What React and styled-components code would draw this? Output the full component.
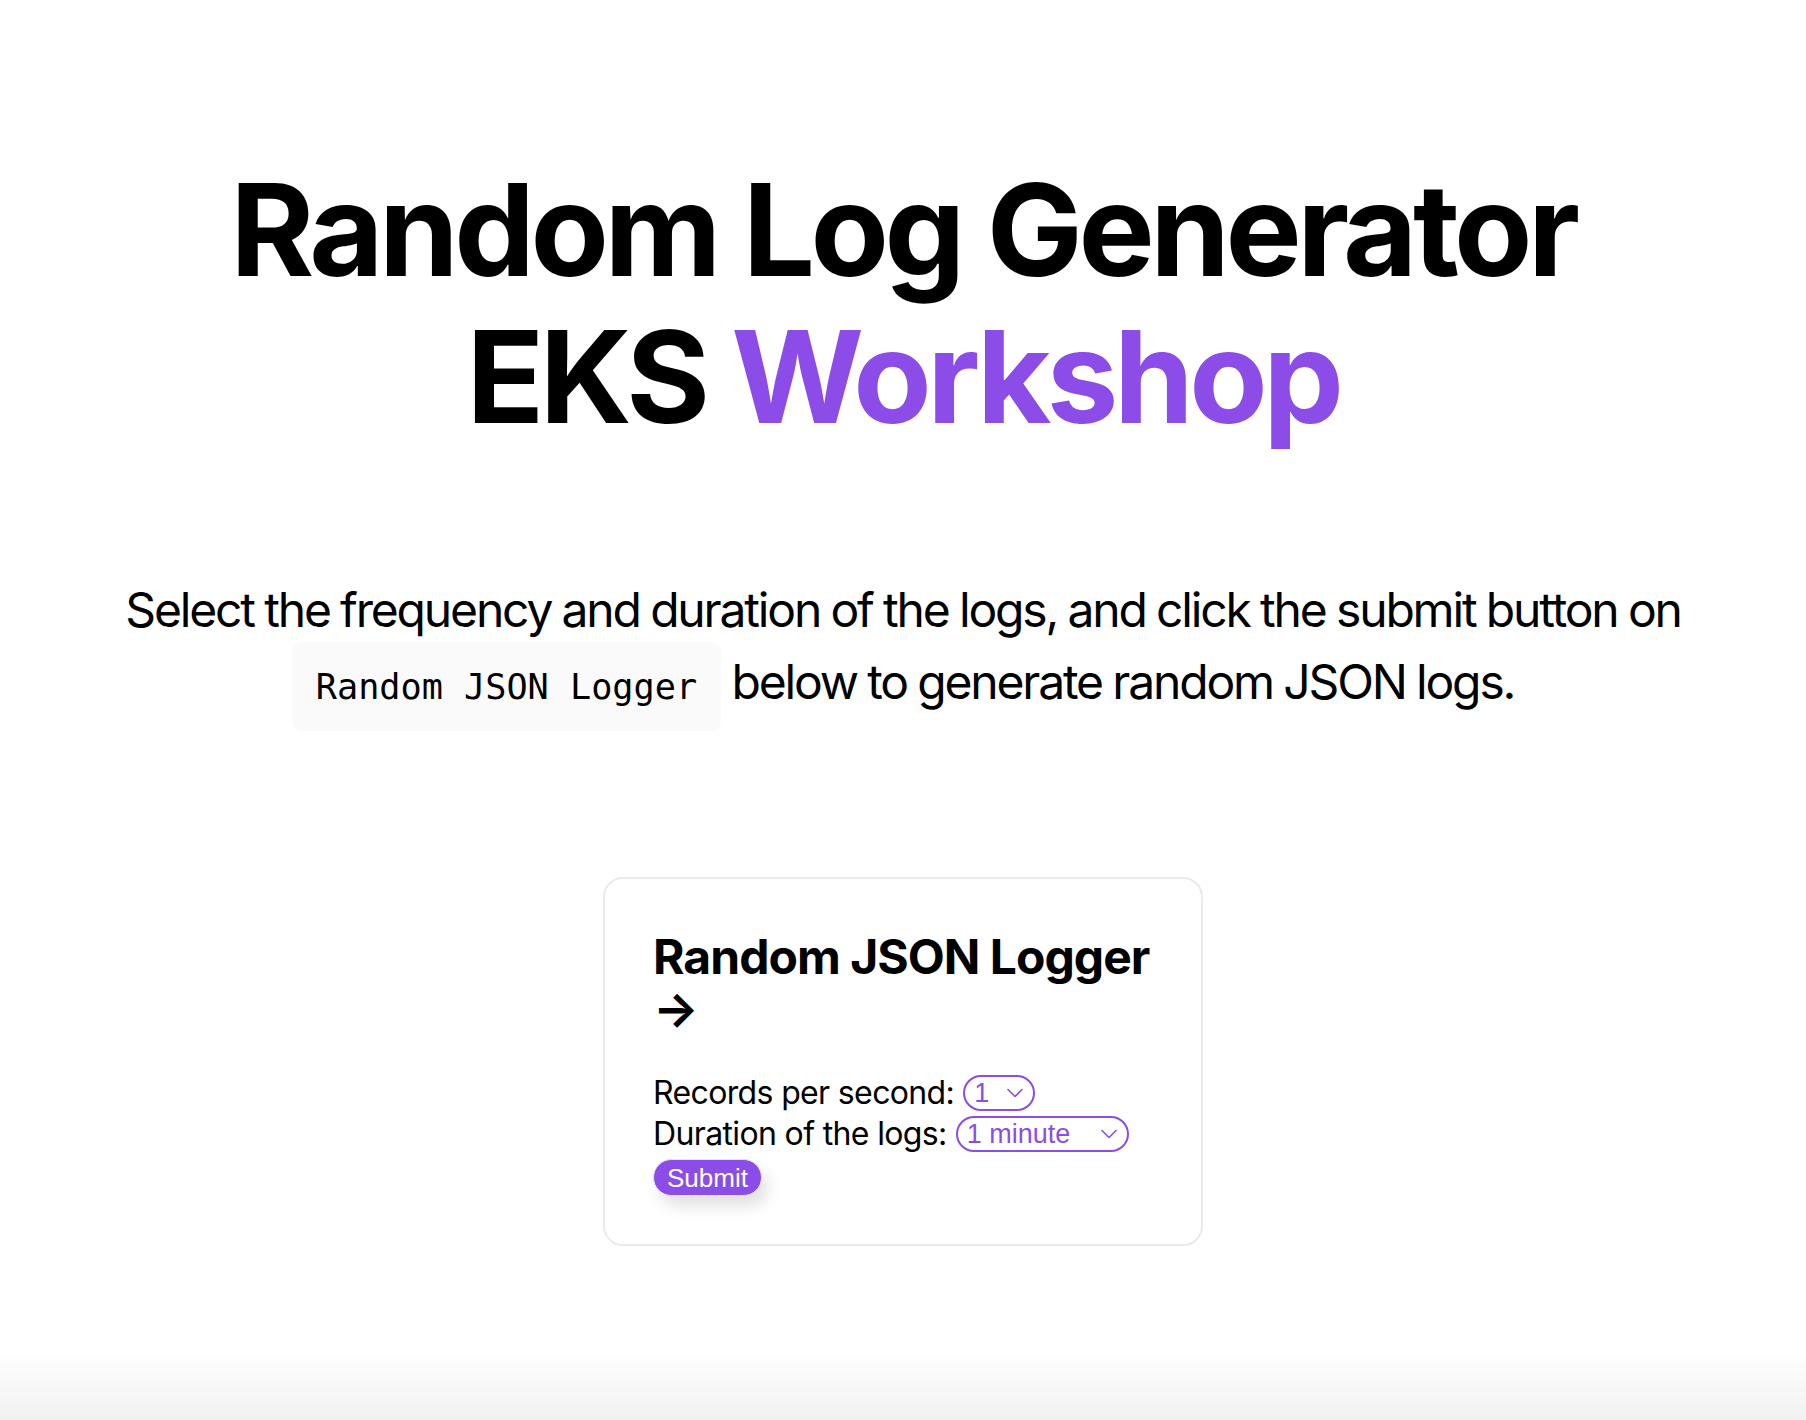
import React from 'react';
import styled, {createGlobalStyle} from 'styled-components';

const GlobalStyle = createGlobalStyle`
  html, body {
    margin: 0;
    padding: 0;
    background: #ffffff;
    color: #000000;
    font-family: Inter, "Noto Sans", "Liberation Sans", sans-serif;
  }
  * {
    box-sizing: border-box;
  }
`;

const purple = '#8b4ce8';

const Page = styled.div`
  min-height: 1420px;
  padding: 0 16px;
  display: flex;
  flex-direction: column;
  align-items: center;
  background: linear-gradient(to bottom, #ffffff 0, #ffffff calc(100% - 70px), #f1f1f1 100%);
`;

const Main = styled.main`
  padding-top: 156px;
  display: flex;
  flex-direction: column;
  align-items: center;
`;

const Title = styled.h1`
  margin: 0;
  font-size: 128px;
  line-height: 1.15;
  font-weight: 700;
  letter-spacing: -0.035em;
  text-align: center;
`;

const Accent = styled.span`
  color: ${purple};
`;

const Description = styled.p`
  max-width: 1640px;
  margin: 124px 0 127px;
  font-size: 48px;
  line-height: 1.5;
  letter-spacing: -0.045em;
  word-spacing: -1px;
  text-align: center;
`;

const Code = styled.code`
  white-space: nowrap;
  background: #fafafa;
  border-radius: 10px;
  padding: 24px;
  font-size: 35.2px;
  letter-spacing: 0;
  word-spacing: 0;
  font-family: "DejaVu Sans Mono", "Liberation Mono", monospace;
`;

const Grid = styled.div`
  display: flex;
  align-items: center;
  justify-content: center;
  flex-wrap: wrap;
`;

const Card = styled.div`
  margin: 32px;
  width: 600px;
  padding: 48px;
  text-align: left;
  border: 2px solid #eaeaea;
  border-radius: 20px;
`;

const CardTitle = styled.h2`
  margin: 4px 0 37px 0;
  font-size: 48px;
  line-height: 52px;
  font-weight: 700;
  letter-spacing: -0.02em;
`;

const Form = styled.form`
  display: flex;
  flex-direction: column;
  align-items: flex-start;
`;

const Row = styled.div`
  display: flex;
  align-items: center;
  gap: 9px;
  height: 41px;
`;

const Label = styled.label`
  font-size: 32px;
  letter-spacing: -0.02em;
`;

const SelectBox = styled.div`
  display: inline-flex;
  align-items: center;
  width: ${p => p.$width}px;
  height: 36px;
  padding: 0 10px 0 9px;
  border: 2px solid ${purple};
  border-radius: 18px;
  color: ${purple};
`;

const NativeSelect = styled.select`
  flex: 1;
  min-width: 0;
  appearance: none;
  -webkit-appearance: none;
  border: none;
  outline: none;
  background: transparent;
  padding: 0;
  color: ${purple};
  font-family: "Liberation Sans", Arial, sans-serif;
  font-size: 27px;
`;

const Chevron = () => (
    <svg width="16" height="10" viewBox="0 0 16 10" fill="none">
        <path d="M1 1.5 L8 8.5 L15 1.5" stroke={purple} strokeWidth="1.6" strokeLinecap="round" strokeLinejoin="round"/>
    </svg>
);

const SubmitButton = styled.button`
  margin-top: 5px;
  height: 37px;
  padding: 0 13px;
  border: 1px solid #e6e6e6;
  border-radius: 19px;
  background: ${purple};
  color: #ffffff;
  font-family: "Liberation Sans", Arial, sans-serif;
  font-size: 26px;
  line-height: 1;
  box-shadow: 6px 10px 16px rgba(0, 0, 0, 0.12);
  cursor: pointer;
`;

export default function App() {
    return (
        <>
            <GlobalStyle/>
            <Page>
                <Main>
                    <Title>
                        Random Log Generator<br/>
                        EKS <Accent>Workshop</Accent>
                    </Title>

                    <Description>
                        Select the frequency and duration of the logs, and click the submit button on{' '}
                        <Code>Random JSON Logger</Code> below to generate random JSON logs.
                    </Description>

                    <Grid>
                        <Card>
                            <CardTitle>Random JSON Logger &rarr;</CardTitle>
                            <Form onSubmit={e => e.preventDefault()}>
                                <Row>
                                    <Label htmlFor="rps">Records per second:</Label>
                                    <SelectBox $width={72}>
                                        <NativeSelect id="rps" defaultValue="1">
                                            <option value="1">1</option>
                                            <option value="10">10</option>
                                            <option value="100">100</option>
                                        </NativeSelect>
                                        <Chevron/>
                                    </SelectBox>
                                </Row>
                                <Row>
                                    <Label htmlFor="duration">Duration of the logs:</Label>
                                    <SelectBox $width={173}>
                                        <NativeSelect id="duration" defaultValue="1">
                                            <option value="1">1 minute</option>
                                            <option value="5">5 minutes</option>
                                            <option value="10">10 minutes</option>
                                        </NativeSelect>
                                        <Chevron/>
                                    </SelectBox>
                                </Row>
                                <SubmitButton type="submit">Submit</SubmitButton>
                            </Form>
                        </Card>
                    </Grid>
                </Main>
            </Page>
        </>
    );
}
